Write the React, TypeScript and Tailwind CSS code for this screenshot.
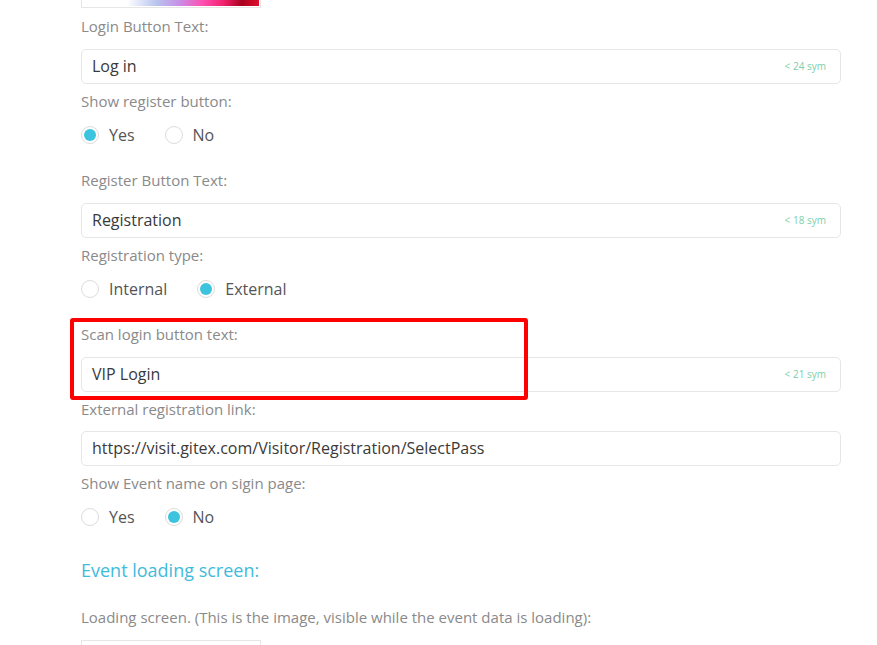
import React from "react"

type Opt = { label: string; checked: boolean }

const Label = ({ children, className = "" }: { children: React.ReactNode; className?: string }) => (
  <div className={`text-[15px] leading-5 text-[#8a8a8a] ${className}`}>{children}</div>
)

const TextInput = ({ value, limit }: { value: string; limit?: string }) => (
  <div className="h-[35px] rounded-[5px] border border-[#e6e6e6] bg-white flex items-center justify-between pl-[10px] pr-[14px]">
    <span className="text-[16px] leading-5 -mt-[1px] text-[#3a3a3a]">{value}</span>
    {limit && <span className="text-[10px] text-[#7ccfa9]">{limit}</span>}
  </div>
)

const Radio = ({ checked }: { checked: boolean }) => (
  <span className="w-[18px] h-[18px] rounded-full border border-[#dcdcdc] bg-white flex items-center justify-center">
    {checked && <span className="w-[12px] h-[12px] rounded-full bg-[#3cc3de]" />}
  </span>
)

const RadioGroup = ({ options }: { options: Opt[] }) => (
  <div className="flex items-center gap-[30px] h-5">
    {options.map((o) => (
      <label key={o.label} className="flex items-center gap-[10px] text-[16px] text-[#555]">
        <Radio checked={o.checked} />
        <span>{o.label}</span>
      </label>
    ))}
  </div>
)

export default function App() {
  return (
    <div className="relative w-[877px] h-[645px] overflow-hidden bg-white" style={{ fontFamily: '"Open Sans", sans-serif' }}>
      <div className="pl-[81px] w-[841px]">
        {/* color preview (cut off at top) */}
        <div className="w-[180px] h-[8px] border border-t-0 border-[#e6e6e6] p-[1px] pt-0">
          <div className="h-full bg-[linear-gradient(100deg,#fff_0%,#fff_25%,#b8c4ee_42%,#c98de6_55%,#ff4fb0_68%,#f0206a_80%,#a8001c_90%,#e0102e_100%)]" />
        </div>

        <Label className="mt-[8px] mb-[13px]">Login Button Text:</Label>
        <TextInput value="Log in" limit="< 24 sym" />

        <Label className="mt-[7px] mb-[14px]">Show register button:</Label>
        <RadioGroup options={[{ label: "Yes", checked: true }, { label: "No", checked: false }]} />

        <Label className="mt-[25px] mb-[13px]">Register Button Text:</Label>
        <TextInput value="Registration" limit="< 18 sym" />

        <Label className="mt-[7px] mb-[14px]">Registration type:</Label>
        <RadioGroup options={[{ label: "Internal", checked: false }, { label: "External", checked: true }]} />

        <Label className="mt-[25px] mb-[13px]">Scan login button text:</Label>
        <TextInput value="VIP Login" limit="< 21 sym" />

        <Label className="mt-[7px] mb-[12px]">External registration link:</Label>
        <TextInput value="https://visit.gitex.com/Visitor/Registration/SelectPass" />

        <Label className="mt-[7px] mb-[14px]">Show Event name on sigin page:</Label>
        <RadioGroup options={[{ label: "Yes", checked: false }, { label: "No", checked: true }]} />

        <div className="mt-[30px] text-[18px] leading-[26px] text-[#3fbbdb]">Event loading screen:</div>

        <Label className="mt-[24px]">Loading screen. (This is the image, visible while the event data is loading):</Label>

        <div className="mt-[13px] w-[180px] h-[20px] border border-[#e6e6e6]" />
      </div>

      {/* annotation */}
      <div className="absolute left-[70px] top-[318px] w-[458px] h-[82px] border-[4px] border-[#ff0000] rounded-[3px]" />
    </div>
  )
}
